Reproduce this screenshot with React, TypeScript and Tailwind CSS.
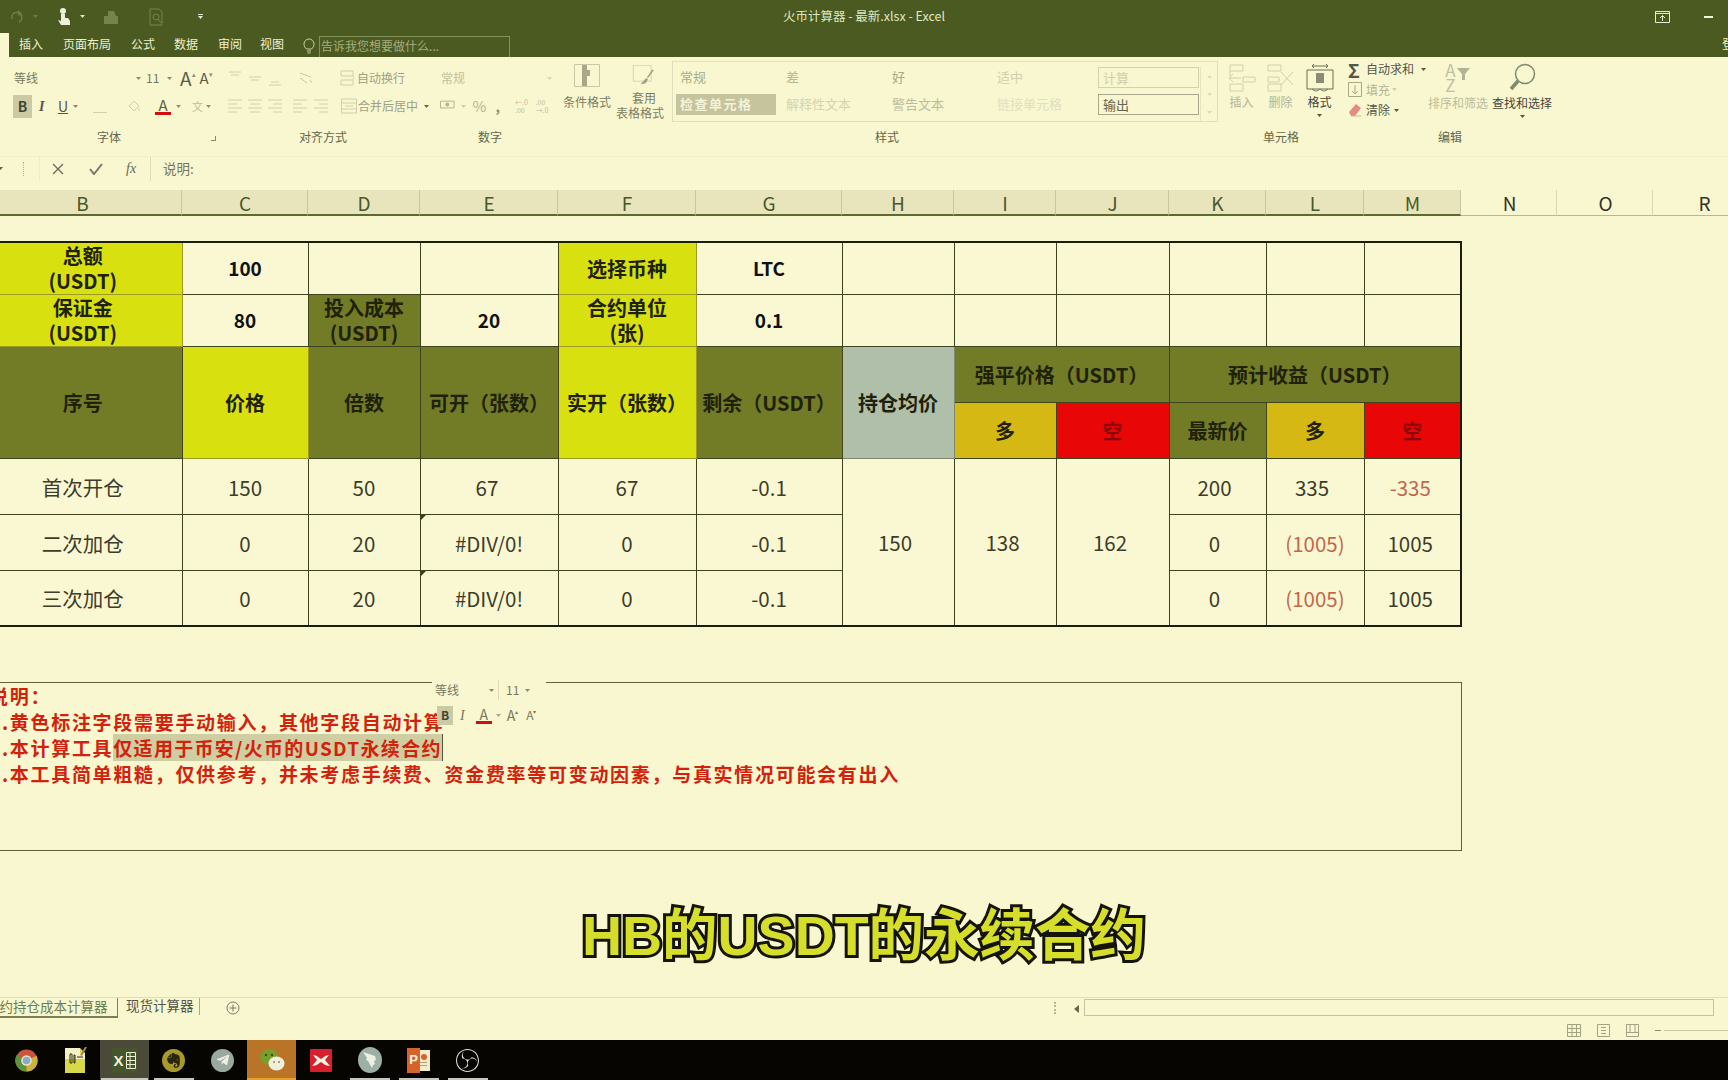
import React, { ReactNode } from 'react';
import { SiEvernote, SiObsstudio } from 'react-icons/si';
import { FaTelegramPlane } from 'react-icons/fa';

const cjk = "font-['Noto_Sans_CJK_SC','Noto_Sans',sans-serif]";

const Caret: React.FC<{ className?: string }> = ({ className = 'text-[#8b8b70]' }) => (
  <svg width="5" height="3" viewBox="0 0 5 3" className={`shrink-0 ${className}`}>
    <path d="M0 0h5L2.5 3z" fill="currentColor" />
  </svg>
);

// three stacked strokes used by the alignment buttons
const Lines: React.FC<{ kind: 'left' | 'center' | 'right' | 'top' | 'mid' | 'bottom' }> = ({ kind }) => {
  const rows: Record<string, string> = {
    left: 'M1 3h14M1 7h9M1 11h14M1 15h9',
    center: 'M1 3h14M3 7h10M1 11h14M3 15h10',
    right: 'M1 3h14M6 7h9M1 11h14M6 15h9',
    top: 'M2 3h12M4 6h8',
    mid: 'M2 8h12M4 11h8',
    bottom: 'M4 13h8M2 16h12',
  };
  return (
    <svg width="16" height="18" viewBox="0 0 16 18" className="text-[#d0d0ae]">
      <path d={rows[kind]} stroke="currentColor" strokeWidth="1" fill="none" />
    </svg>
  );
};

const TitleBar = () => (
  <header className="h-[57px] shrink-0 bg-[#4b5a20] flex flex-col">
    <div className="h-[33px] flex items-center relative">
      <svg width="16" height="16" viewBox="0 0 16 16" className="ml-[9px] text-[#6f7d47]">
        <path d="M3 10a5 5 0 1 1 7 3M9 2l3 3-3 1" stroke="currentColor" strokeWidth="1.6" fill="none" />
      </svg>
      <Caret className="ml-[8px] text-[#6f7d47]" />
      <svg width="14" height="20" viewBox="0 0 14 20" className="ml-[19px] text-[#eef0dc]">
        <circle cx="6" cy="4" r="3" fill="currentColor" />
        <path d="M4 7h4v4h3l2 3v4H4l-3-5 3 1z" fill="currentColor" />
      </svg>
      <Caret className="ml-[9px] text-[#dfe3c8]" />
      <svg width="20" height="18" viewBox="0 0 20 18" className="ml-[17px] text-[#75844a]">
        <path d="M2 8h14v8H2zM6 8V3h6l2 5M17 5v4" fill="currentColor" />
      </svg>
      <svg width="15" height="18" viewBox="0 0 15 18" className="ml-[27px] text-[#75844a]">
        <path d="M1 1h9l3 3v13H1zM9 11l3 4" stroke="currentColor" fill="none" />
        <circle cx="7" cy="9" r="3" stroke="currentColor" fill="none" />
      </svg>
      <div className="ml-[34px] flex flex-col items-center gap-[1px]">
        <span className="w-[5px] h-[1px] bg-[#e4e8d0]" />
        <Caret className="text-[#e4e8d0]" />
      </div>
      <div className="absolute inset-x-0 top-[7px] text-center text-[12.5px] leading-[18px] text-[#dfe8c2]">
        火币计算器 - 最新.xlsx - Excel
      </div>
      <div className="ml-auto flex items-center mr-[15px] gap-[34px]">
        <svg width="15" height="12" viewBox="0 0 15 12" className="text-[#e6ecd0]">
          <path d="M.5.5h14v11H.5zM.5 2.5h14M7.5 10V5M5 7l2.5-2.5L10 7" stroke="currentColor" fill="none" />
        </svg>
        <span className="w-[9px] h-[2px] bg-[#f2f4e0]" />
      </div>
    </div>
    <nav className="h-[24px] flex text-[12px] text-[#eef0d0]">
      <div className="w-[9px] bg-[#f8f7cf]" />
      <span className="ml-[10px] leading-[22px]">插入</span>
      <span className="ml-[20px] leading-[22px]">页面布局</span>
      <span className="ml-[20px] leading-[22px]">公式</span>
      <span className="ml-[19px] leading-[22px]">数据</span>
      <span className="ml-[20px] leading-[22px]">审阅</span>
      <span className="ml-[18px] leading-[22px]">视图</span>
      <svg width="12" height="17" viewBox="0 0 12 17" className="ml-[19px] mt-[5px] text-[#c8d0a4]">
        <path d="M3.5 11C2 9.5 1 8.5 1 6a5 5 0 0 1 10 0c0 2.500-1 3.500-2.500 5zM4 13h4M4.500 15h3" stroke="currentColor" fill="none" />
      </svg>
      <div className="ml-[4px] mt-[3px] w-[191px] h-[21px] border border-b-0 border-[#83925a] text-[#a6ae7e] pl-[1px] leading-[18px]">
        告诉我您想要做什么...
      </div>
      <span className="ml-auto mr-[-8px] leading-[22px] w-[14px] overflow-hidden">登录</span>
    </nav>
  </header>
);

const GroupLabel: React.FC<{ children: ReactNode }> = ({ children }) => (
  <div className="h-[34px] flex items-center justify-center text-[12px] text-[#66664c]">{children}</div>
);

const Ribbon = () => (
  <section className="h-[100px] shrink-0 flex text-[12px] text-[#8f8f74] border-b border-[#f1f0c8]">
    {/* font */}
    <div className="w-[218px] shrink-0 flex flex-col pt-[7px] relative">
      <div className="h-[28px] flex items-center pl-[14px]">
        <span className="w-[122px] text-[#77775f]">等线</span>
        <Caret />
        <span className="ml-[5px] w-[21px] text-[#77775f]">11</span>
        <Caret />
        <span className="ml-[8px] text-[19px] text-[#5d5d49]">A</span>
        <span className="mb-[8px] text-[7px]">▴</span>
        <span className="ml-[4px] text-[15px] text-[#5d5d49]">A</span>
        <span className="mb-[8px] text-[7px]">▾</span>
      </div>
      <div className="h-[28px] flex items-center pl-[13px]">
        <span className="w-[19px] h-[23px] bg-[#cbcaa4] flex items-center justify-center font-bold text-[14px] text-[#454534]">B</span>
        <span className="ml-[7px] w-[12px] italic font-bold text-[14px] font-['Liberation_Serif',serif] text-[#54544a]">I</span>
        <span className="ml-[7px] text-[14px] underline text-[#54544a]">U</span>
        <Caret className="ml-[5px] text-[#8b8b70]" />
        <span className="ml-[15px] w-[14px] h-[1px] mt-[12px] bg-[#d0d0ae]" />
        <svg width="14" height="14" viewBox="0 0 14 14" className="ml-[20px] text-[#cfcfac]">
          <path d="M2 7l5-5 5 5-5 5zM12 9v3" stroke="currentColor" fill="none" />
        </svg>
        <div className="ml-[14px] flex flex-col items-center w-[16px]">
          <span className="text-[15px] leading-[15px] text-[#5d5d49]">A</span>
          <span className="w-[16px] h-[3px] bg-[#d01010]" />
        </div>
        <Caret className="ml-[5px]" />
        <span className="ml-[11px] text-[11px] text-[#bcbc9c]">文</span>
        <Caret className="ml-[3px]" />
      </div>
      <GroupLabel>字体</GroupLabel>
      <span className="absolute right-[2px] bottom-[15px] w-[5px] h-[5px] border-r border-b border-[#88886c]" />
    </div>

    {/* alignment */}
    <div className="w-[210px] shrink-0 flex flex-col pt-[7px] whitespace-nowrap">
      <div className="h-[28px] flex items-center pl-[9px]">
        <div className="flex gap-[4px]">
          <Lines kind="top" />
          <Lines kind="mid" />
          <Lines kind="bottom" />
        </div>
        <svg width="16" height="16" viewBox="0 0 16 16" className="ml-[15px] text-[#c8c8a6]">
          <path d="M2 3l11 4M2 8l7 5M12 10l2 3" stroke="currentColor" fill="none" />
        </svg>
        <svg width="16" height="16" viewBox="0 0 16 16" className="ml-[26px] text-[#cfcfac]">
          <path d="M1 1h12v5H1zM1 10h12v5H1zM13 6c2 2 0 4-2 4" stroke="currentColor" fill="none" />
        </svg>
        <span className="ml-[1px] text-[#a0a084]">自动换行</span>
      </div>
      <div className="h-[28px] flex items-center pl-[9px]">
        <div className="flex gap-[4px] shrink-0">
          <Lines kind="left" />
          <Lines kind="center" />
          <Lines kind="right" />
        </div>
        <div className="ml-[9px] flex gap-[5px] shrink-0">
          <Lines kind="left" />
          <Lines kind="right" />
        </div>
        <svg width="16" height="16" viewBox="0 0 16 16" className="ml-[12px] shrink-0 text-[#cfcfac]">
          <path d="M.5 1h15v14H.5zM.5 5h15M.5 11h15M4 8h8" stroke="currentColor" fill="none" />
        </svg>
        <span className="ml-[1px] shrink-0 text-[#a0a084]">合并后居中</span>
        <Caret className="ml-[6px] text-[#66664c]" />
      </div>
      <GroupLabel>对齐方式</GroupLabel>
    </div>

    {/* number */}
    <div className="w-[124px] shrink-0 flex flex-col pt-[7px]">
      <div className="h-[28px] flex items-center pl-[13px]">
        <span className="w-[108px] text-[#c0c09e]">常规</span>
        <Caret className="text-[#d6d6b6]" />
      </div>
      <div className="h-[28px] flex items-center pl-[12px]">
        <svg width="15" height="12" viewBox="0 0 15 12" className="text-[#b5b594]">
          <path d="M.5 1h14v7H.5z" stroke="currentColor" fill="none" />
          <circle cx="7.500" cy="4.500" r="2" fill="currentColor" />
        </svg>
        <Caret className="ml-[6px] text-[#cfcfac]" />
        <span className="ml-[7px] text-[15px] text-[#b4b494]">%</span>
        <span className="ml-[9px] font-bold text-[14px] text-[#8c8c70]">,</span>
        <div className="ml-[15px] text-[7px] leading-[8px] text-[#c0c09e] w-[17px]">
          <div>←.0</div>
          <div>.00</div>
        </div>
        <div className="ml-[4px] text-[7px] leading-[8px] text-[#c0c09e] w-[17px]">
          <div>.00</div>
          <div>→.0</div>
        </div>
      </div>
      <GroupLabel>数字</GroupLabel>
    </div>

    {/* styles */}
    <div className="w-[670px] shrink-0 flex flex-col pt-[4px]">
      <div className="h-[59px] flex text-[#7d7d64]">
        <div className="w-[58px] ml-[6px] mt-[3px] flex flex-col items-center">
          <svg width="26" height="27" viewBox="0 0 26 27" className="text-[#c8c8a8]">
            <path d="M.5.5h25v22H.5z" stroke="currentColor" fill="none" />
            <path d="M8 1h5v5h3v6h-3v10H8z" fill="#a8a888" />
          </svg>
          <span className="mt-[3px] leading-[15px]">条件格式</span>
        </div>
        <div className="w-[48px] flex flex-col items-center mt-[3px]">
          <svg width="32" height="29" viewBox="0 0 32 29" className="ml-[8px] mt-[1px] text-[#c8c8a8]">
            <path d="M.5.500h26v23H.5z" stroke="currentColor" fill="none" />
            <path d="M30 8l-8 11-2-1 8-12zM19 19l3 2-4 6-7 1z" fill="#a4a484" />
          </svg>
          <span className="ml-[8px] leading-[15px] mt-[5px]">套用</span>
          <span className="leading-[15px] whitespace-nowrap">表格格式</span>
        </div>
        <div className="ml-[8px] w-[546px] h-[61px] shrink-0 border border-[#dfdfbc] pl-[3px] pt-[5px] flex">
          <div className="w-[523px] grid grid-cols-[106px_106px_105px_105px_101px] grid-rows-[21px_21px] gap-y-[6px] text-[13px] leading-[20px]">
            <span className="pl-[4px] text-[#a9a98c]">常规</span>
            <span className="pl-[4px] text-[#b7b798]">差</span>
            <span className="pl-[4px] text-[#a9a98c]">好</span>
            <span className="pl-[4px] text-[#d0d0ae]">适中</span>
            <span className="pl-[4px] border border-[#d2d2b0] text-[#cfcfac]">计算</span>
            <span className="mr-[6px] bg-[#c6c49c] pl-[4px] font-bold text-[#f4f3d8] tracking-[1.500px]">检查单元格</span>
            <span className="pl-[4px] text-[#d4d4b2]">解释性文本</span>
            <span className="pl-[4px] text-[#bcbc9c]">警告文本</span>
            <span className="pl-[4px] text-[#e0e0c0]">链接单元格</span>
            <span className="pl-[4px] border border-[#a8a88a] text-[#63634e]">输出</span>
          </div>
          <div className="flex-1 flex flex-col items-center justify-around border-l border-[#e4e4c2] ml-[1px]">
            <Caret className="text-[#dcdcba] rotate-180" />
            <Caret className="text-[#dcdcba]" />
            <Caret className="text-[#dcdcba]" />
          </div>
        </div>
      </div>
      <GroupLabel>样式</GroupLabel>
    </div>

    {/* cells */}
    <div className="w-[118px] shrink-0 flex flex-col pt-[4px]">
      <div className="h-[59px] flex text-[12px] text-center pt-[2px]">
        <div className="w-[39px] flex flex-col items-center text-[#b4b496]">
          <svg width="30" height="29" viewBox="0 0 30 29" className="text-[#d0d0ae]">
            <path d="M3 2h13v6H3zM16 14h12v5H16zM3 21h13v7H3zM3 8v5M14 15H2M6 11l-4 4 4 4" stroke="currentColor" fill="none" />
          </svg>
          <span className="mt-[2px] leading-[15px]">插入</span>
        </div>
        <div className="w-[39px] flex flex-col items-center text-[#b4b496]">
          <svg width="30" height="29" viewBox="0 0 30 29" className="text-[#d0d0ae]">
            <path d="M2 2h13v6H2zM2 14h11v5H2zM2 21h13v7H2zM15 9l12 13M27 9L15 22" stroke="currentColor" fill="none" />
          </svg>
          <span className="mt-[2px] leading-[15px]">删除</span>
        </div>
        <div className="w-[39px] flex flex-col items-center text-[#45453a]">
          <svg width="28" height="29" viewBox="0 0 28 29" className="text-[#6b6b55]">
            <path d="M1 7h26v19H1zM6 3h16M6 3l2-2M6 3l2 2M22 3l-2-2M22 3l-2 2M6 26c3 3 6 2 8 0 2 2 5 3 8 0" stroke="currentColor" fill="none" />
            <path d="M10 10h8v10h-8z" fill="#8b8b78" />
          </svg>
          <span className="mt-[2px] leading-[15px]">格式</span>
          <Caret className="mt-[5px] text-[#55554a]" />
        </div>
      </div>
      <GroupLabel>单元格</GroupLabel>
    </div>

    {/* editing */}
    <div className="w-[220px] shrink-0 flex flex-col pt-[4px]">
      <div className="h-[59px] flex text-[12px]">
        <div className="w-[86px] pl-[8px] -mt-[2px] flex flex-col">
          <div className="h-[21px] flex items-center text-[#55554a]">
            <span className="w-[17px] text-[19px] font-bold leading-none">Σ</span>
            <span className="ml-[1px]">自动求和</span>
            <Caret className="ml-[7px]" />
          </div>
          <div className="h-[21px] flex items-center text-[#b4b496]">
            <svg width="14" height="15" viewBox="0 0 14 15" className="text-[#a8a88a]">
              <path d="M.5.500h13v14H.500zM7 3v9M4 9l3 3 3-3" stroke="currentColor" fill="none" />
            </svg>
            <span className="ml-[4px]">填充</span>
            <Caret className="ml-[2px] text-[#d0d0ae]" />
          </div>
          <div className="h-[20px] flex items-center text-[#55554a]">
            <svg width="14" height="14" viewBox="0 0 14 14">
              <path d="M1 9l7-8 5 4-6 8H3z" fill="#e28d84" />
              <path d="M3 13h10" stroke="#bcbc9c" />
            </svg>
            <span className="ml-[4px]">清除</span>
            <Caret className="ml-[4px]" />
          </div>
        </div>
        <div className="w-[64px] flex flex-col items-center text-[#bcbc9e]">
          <div className="h-[31px] flex items-center text-[#c0c0a2]">
            <div className="text-[17px] leading-[15px] flex flex-col">
              <span>A</span>
              <span>Z</span>
            </div>
            <svg width="15" height="15" viewBox="0 0 15 15" className="mb-[6px]">
              <path d="M1 2h13L9 8v6H6V8z" fill="#b2b294" />
            </svg>
          </div>
          <span className="mt-[3px] leading-[15px] whitespace-nowrap">排序和筛选</span>
        </div>
        <div className="w-[64px] flex flex-col items-center text-[#45453a]">
          <svg width="30" height="29" viewBox="0 0 30 29" className="mt-[2px] text-[#7f8a70]">
            <circle cx="18" cy="11" r="9.500" stroke="currentColor" strokeWidth="1.500" fill="none" />
            <path d="M11 18l-7 8" stroke="currentColor" strokeWidth="3.500" />
          </svg>
          <span className="mt-[3px] leading-[15px] whitespace-nowrap">查找和选择</span>
          <Caret className="mt-[5px] text-[#55554a]" />
        </div>
      </div>
      <GroupLabel>编辑</GroupLabel>
    </div>
  </section>
);

const FormulaBar = () => (
  <section className="h-[33px] shrink-0 flex items-center pb-[10px] text-[#76765e]">
    <Caret className="text-[#66664c] -ml-[2px]" />
    <span className="ml-[20px] w-[2px] h-[14px] border-l border-dotted border-[#b5b596]" />
    <span className="ml-[14px] w-[1px] h-[24px] bg-[#eeedc4]" />
    <svg width="12" height="12" viewBox="0 0 12 12" className="ml-[12px]">
      <path d="M1 1l10 10M11 1L1 11" stroke="#6a6a5a" strokeWidth="1.300" />
    </svg>
    <svg width="14" height="12" viewBox="0 0 14 12" className="ml-[25px]">
      <path d="M1 6l4 5 8-10" stroke="#77776a" strokeWidth="2" fill="none" />
    </svg>
    <span className="ml-[23px] text-[14px] italic font-['Liberation_Serif',serif] text-[#6a6a58]">fx</span>
    <span className="ml-[14px] w-[1px] h-[24px] bg-[#dcdcb8]" />
    <span className="ml-[12px] text-[13.5px]">说明:</span>
  </section>
);

const columns = [
  { label: 'C', w: 'w-[126px]' },
  { label: 'D', w: 'w-[112px]' },
  { label: 'E', w: 'w-[138px]' },
  { label: 'F', w: 'w-[138px]' },
  { label: 'G', w: 'w-[146px]' },
  { label: 'H', w: 'w-[112px]' },
  { label: 'I', w: 'w-[102px]' },
  { label: 'J', w: 'w-[113px]' },
  { label: 'K', w: 'w-[97px]' },
  { label: 'L', w: 'w-[98px]' },
  { label: 'M', w: 'w-[97px]' },
];

const cellHead = 'shrink-0 bg-[#e8e5bc] text-[#49582a] border-r border-[#c9c7a0] border-b-2 border-b-[#5d6a30] pl-[1px]';

const ColumnHeader = () => (
  <div className="h-[26px] shrink-0 flex text-[19px] leading-[25px] text-center">
    {/* B starts left of the window, its label is centred on the hidden part too */}
    <div className={`w-[199px] -ml-[17px] ${cellHead}`}>B</div>
    {columns.map((c) => (
      <div key={c.label} className={`${c.w} ${cellHead}`}>
        {c.label}
      </div>
    ))}
    {['N', 'O'].map((l) => (
      <div key={l} className="w-[96px] shrink-0 pl-[2px] text-[#33332a] border-r border-[#d8d8b4] border-b border-b-[#b8b896]">
        {l}
      </div>
    ))}
    <div className="w-[100px] shrink-0 pl-[3px] text-[#33332a] border-b border-b-[#b8b896]">R</div>
  </div>
);

const line = 'border border-[#3f431e] text-center align-middle';
const head = `${line} font-bold text-[20px] leading-[25px] text-[#1f2208]`;
const lime = `${head} bg-[#d8e010] border-[#9c9c24]`;
const olive = `${head} bg-[#727b25]`;
const value = `${line} font-bold text-[19px] text-[#111]`;
const data = `${line} text-[20.500px] pt-[2px] text-[#3d3d2a]`;
const loss = 'text-[#c4664a]';

const CommentMark = () => (
  <span className="absolute left-0 top-0 w-0 h-0 border-t-[5px] border-t-[#3d4014] border-r-[5px] border-r-transparent" />
);

const CalcTable = () => (
  <table className="table-fixed border-collapse -ml-[18px] w-[1479px] border-2 border-[#1c1e0c] bg-[#faf8d3]">
    <colgroup>
      <col className="w-[199px]" />
      <col className="w-[126px]" />
      <col className="w-[112px]" />
      <col className="w-[138px]" />
      <col className="w-[138px]" />
      <col className="w-[146px]" />
      <col className="w-[112px]" />
      <col className="w-[102px]" />
      <col className="w-[113px]" />
      <col className="w-[97px]" />
      <col className="w-[98px]" />
      <col className="w-[97px]" />
    </colgroup>
    <tbody>
      <tr className="h-[52px]">
        <td className={lime}>总额<br />(USDT)</td>
        <td className={value}>100</td>
        <td className={line} />
        <td className={line} />
        <td className={lime}>选择币种</td>
        <td className={value}>LTC</td>
        <td className={line} />
        <td className={line} />
        <td className={line} />
        <td className={line} />
        <td className={line} />
        <td className={line} />
      </tr>
      <tr className="h-[52px]">
        <td className={lime}>保证金<br />(USDT)</td>
        <td className={value}>80</td>
        <td className={olive}>投入成本<br />(USDT)</td>
        <td className={value}>20</td>
        <td className={lime}>合约单位<br />(张)</td>
        <td className={value}>0.1</td>
        <td className={line} />
        <td className={line} />
        <td className={line} />
        <td className={line} />
        <td className={line} />
        <td className={line} />
      </tr>
      <tr className="h-[56px]">
        <td rowSpan={2} className={olive}>序号</td>
        <td rowSpan={2} className={lime}>价格</td>
        <td rowSpan={2} className={olive}>倍数</td>
        <td rowSpan={2} className={`${olive} whitespace-nowrap`}>可开（张数）</td>
        <td rowSpan={2} className={`${lime} whitespace-nowrap`}>实开（张数）</td>
        <td rowSpan={2} className={`${olive} whitespace-nowrap`}>剩余（USDT）</td>
        <td rowSpan={2} className={`${head} bg-[#afbfa9] border-[#7e8a70]`}>持仓均价</td>
        <td colSpan={2} className={olive}>强平价格（USDT）</td>
        <td colSpan={3} className={olive}>预计收益（USDT）</td>
      </tr>
      <tr className="h-[56px]">
        <td className={`${head} bg-[#d6b814]`}>多</td>
        <td className={`${head} bg-[#e90606] text-[#8a0808]`}>空</td>
        <td className={olive}>最新价</td>
        <td className={`${head} bg-[#d6b814]`}>多</td>
        <td className={`${head} bg-[#e90606] text-[#8a0808]`}>空</td>
      </tr>
      <tr className="h-[56px]">
        <td className={data}>首次开仓</td>
        <td className={data}>150</td>
        <td className={data}>50</td>
        <td className={`${data} pr-[4px]`}>67</td>
        <td className={data}>67</td>
        <td className={data}>-0.1</td>
        <td rowSpan={3} className={`${data} pr-[6px]`}>150</td>
        <td rowSpan={3} className={`${data} pr-[5px]`}>138</td>
        <td rowSpan={3} className={`${data} pr-[5px]`}>162</td>
        <td className={`${data} pr-[6px]`}>200</td>
        <td className={`${data} pr-[6px]`}>335</td>
        <td className={`${data} pr-[4px] ${loss}`}>-335</td>
      </tr>
      <tr className="h-[56px]">
        <td className={data}>二次加仓</td>
        <td className={data}>0</td>
        <td className={data}>20</td>
        <td className={`${data} relative`}><CommentMark />#DIV/0!</td>
        <td className={data}>0</td>
        <td className={data}>-0.1</td>
        <td className={`${data} pr-[6px]`}>0</td>
        <td className={`${data} ${loss}`}>(1005)</td>
        <td className={`${data} pr-[4px]`}>1005</td>
      </tr>
      <tr className="h-[56px]">
        <td className={data}>三次加仓</td>
        <td className={data}>0</td>
        <td className={data}>20</td>
        <td className={`${data} relative`}><CommentMark />#DIV/0!</td>
        <td className={data}>0</td>
        <td className={data}>-0.1</td>
        <td className={`${data} pr-[6px]`}>0</td>
        <td className={`${data} ${loss}`}>(1005)</td>
        <td className={`${data} pr-[4px]`}>1005</td>
      </tr>
    </tbody>
  </table>
);

const NoteBox = () => (
  <div className="mt-[55px] -ml-[17px] w-[1479px] h-[169px] border border-[#5f6534] pl-[5px] text-[19px] leading-[26px] tracking-[1.700px] font-bold text-[#d3220c] whitespace-nowrap">
    <div>说明：</div>
    <div>1.黄色标注字段需要手动输入，其他字段自动计算</div>
    <div>
      2.本计算工具
      <span className="bg-[#cfcda2] border-r border-[#55553c] tracking-[1.300px]">仅适用于币安/火币的USDT永续合约</span>
    </div>
    <div>3.本工具简单粗糙，仅供参考，并未考虑手续费、资金费率等可变动因素，与真实情况可能会有出入</div>
  </div>
);

const MiniToolbar = () => (
  <div className="absolute left-[432px] top-[677px] w-[114px] h-[58px] text-[#77775f] flex flex-col">
    <div className="h-[26px] flex items-center pl-[3px] text-[12px] bg-[#f8f7cf]">
      <span className="w-[54px]">等线</span>
      <Caret />
      <span className="ml-[4px] pl-[7px] w-[27px] border-l border-[#dcdcb8] leading-[20px]">11</span>
      <Caret />
    </div>
    <div className="h-[24px] flex items-center pl-[5px]">
      <span className="w-[16px] h-[19px] bg-[#cbcaa4] flex items-center justify-center font-bold text-[12px] text-[#454534]">B</span>
      <span className="ml-[7px] italic text-[14px] font-['Liberation_Serif',serif]">I</span>
      <div className="ml-[11px] flex flex-col items-center w-[16px]">
        <span className="text-[14px] leading-[14px]">A</span>
        <span className="w-[16px] h-[3px] bg-[#d01010]" />
      </div>
      <Caret className="ml-[4px] text-[#a8a88a]" />
      <span className="ml-[6px] text-[14px]">A</span>
      <span className="mb-[7px] text-[6px]">▴</span>
      <span className="ml-[8px] text-[12px]">A</span>
      <span className="mb-[7px] text-[6px]">▾</span>
    </div>
  </div>
);

const SheetTabs = () => (
  <div className="h-[23px] shrink-0 flex border-t border-[#dedebc] text-[13.500px] overflow-hidden">
    <div className="w-[118px] h-[20px] shrink-0 border-r border-b-2 border-[#7d8050] text-[#6b8052] leading-[16px] whitespace-nowrap overflow-hidden">
      <span className="-ml-[14px] block">合约持仓成本计算器</span>
    </div>
    <span className="ml-[8px] w-[74px] h-[17px] border-r border-[#a8a88a] text-[#55554a] leading-[14px]">现货计算器</span>
    <svg width="14" height="14" viewBox="0 0 14 14" className="ml-[26px] mt-[3px] text-[#77775f]">
      <circle cx="7" cy="7" r="6" stroke="currentColor" fill="none" />
      <path d="M7 3.500v7M3.500 7h7" stroke="currentColor" />
    </svg>
    <span className="ml-[814px] mt-[4px] w-[2px] h-[12px] border-l-2 border-dotted border-[#b8b896]" />
    <svg width="5" height="8" viewBox="0 0 5 8" className="ml-[18px] mt-[7px] text-[#66664c]">
      <path d="M5 0v8L0 4z" fill="currentColor" />
    </svg>
    <div className="ml-[5px] mt-[1px] w-[630px] h-[17px] border border-[#c5c59c]" />
  </div>
);

const StatusBar = () => (
  <div className="h-[20px] shrink-0 flex items-center justify-end text-[#a3a384]">
    <svg width="14" height="13" viewBox="0 0 14 13">
      <path d="M.5.500h13v12H.500zM.5 4.500h13M.5 8.500h13M5 .5v12M9.500.5v12" stroke="currentColor" fill="none" />
    </svg>
    <svg width="13" height="13" viewBox="0 0 13 13" className="ml-[16px]">
      <path d="M.5.500h12v12H.500zM4 3.500h5M4 6.500h5M4 9.500h5" stroke="currentColor" fill="none" />
    </svg>
    <svg width="13" height="13" viewBox="0 0 13 13" className="ml-[16px]">
      <path d="M.5.500h12v12H.500zM.5 8.500h12M4 .5v8M9 .5v8" stroke="currentColor" fill="none" />
    </svg>
    <span className="ml-[16px] w-[6px] h-[1px] bg-[#8e8e72]" />
    <span className="ml-[3px] w-[64px] h-[1px] bg-[#c8c8a8]" />
  </div>
);

const Chrome = () => (
  <svg width="23" height="23" viewBox="0 0 24 24">
    <circle cx="12" cy="12" r="11.500" fill="#c9563a" />
    <path d="M12 12L2 6a11.500 11.500 0 0 0 10 17.500z" fill="#5f9339" />
    <path d="M12 12l10.500-5A11.500 11.500 0 0 1 12 23.500z" fill="#cdb23a" />
    <circle cx="12" cy="12" r="5.500" fill="#e8e4d4" />
    <circle cx="12" cy="12" r="4" fill="#8daac4" />
  </svg>
);

const Notepad = () => (
  <svg width="24" height="28" viewBox="0 0 24 28">
    <path d="M1 2h15l5 5v20H1z" fill="#d7d94a" />
    <path d="M1 2h15v5h5v6H1z" fill="#f2f0c4" />
    <path d="M6 17v-9h2v9zM10 9h1v8h-1zM13 11h6" stroke="#2e2e14" fill="none" />
    <path d="M23 1l-5 9-2-1 5-8z" fill="#b08a48" />
  </svg>
);

const ExcelIcon = () => (
  <div className="w-[25px] h-[25px] bg-[#45552c] flex items-center justify-center gap-[2px]">
    <span className="text-[15px] font-bold leading-none text-[#f2f2dc] font-['Liberation_Sans',sans-serif]">X</span>
    <svg width="10" height="17" viewBox="0 0 10 17" className="text-[#eeeed8]">
      <path d="M.5.500h9v16h-9zM.5 4.500h9M.5 8.500h9M.5 12.500h9M4 .5v16" stroke="currentColor" fill="none" />
    </svg>
  </div>
);

const Evernote = () => (
  <div className="w-[23px] h-[23px] rounded-full bg-[#a79a2a] flex items-center justify-center">
    <SiEvernote size={15} className="text-[#27260f]" />
  </div>
);

const Telegram = () => (
  <div className="w-[23px] h-[23px] rounded-full bg-[#9aa99f] flex items-center justify-center">
    <FaTelegramPlane size={14} className="text-[#eef0e4]" />
  </div>
);

const Wechat = () => (
  <svg width="26" height="24" viewBox="0 0 26 24">
    <ellipse cx="10" cy="9" rx="9" ry="8" fill="#7a9e2e" />
    <circle cx="7" cy="7" r="1.200" fill="#3c4c14" />
    <circle cx="13" cy="7" r="1.200" fill="#3c4c14" />
    <ellipse cx="17.500" cy="15.500" rx="8" ry="7" fill="#f0efdc" />
    <circle cx="15" cy="14" r="1" fill="#8a8a6a" />
    <circle cx="20" cy="14" r="1" fill="#8a8a6a" />
  </svg>
);

const Xmind = () => (
  <svg width="22" height="23" viewBox="0 0 22 23">
    <rect width="22" height="23" rx="1" fill="#d81f2b" />
    <path d="M3 6c4 0 6 3 8 4 2-1 4-4 8-4l-4 5 5 6c-5 0-7-3-9-4-2 1-4 4-9 4l5-6z" fill="#f6f0e2" />
  </svg>
);

const Feather = () => (
  <svg width="24" height="26" viewBox="0 0 24 26">
    <ellipse cx="12" cy="13" rx="12" ry="13" fill="#9cb0a6" />
    <path d="M5 5l12 4 1 4-2 1 1 3-2 1-1 3-4-7-2-1 1-2z" fill="#eef0e2" />
  </svg>
);

const PowerPoint = () => (
  <div className="relative w-[23px] h-[25px] flex items-center">
    <div className="absolute right-0 top-[2px] w-[13px] h-[21px] bg-[#f2ecc8] flex flex-col gap-[2px] items-center justify-center">
      <span className="w-[6px] h-[6px] rounded-full bg-[#d5642b]" />
      <span className="w-[7px] h-[1px] bg-[#b8a070]" />
      <span className="w-[7px] h-[1px] bg-[#b8a070]" />
    </div>
    <div className="absolute left-0 top-0 w-[13px] h-[25px] bg-[#d5642b] flex items-center justify-center text-[13px] font-bold text-[#f8eedc] font-['Liberation_Sans',sans-serif]">
      P
    </div>
  </div>
);

const apps: { key: string; icon: ReactNode; bg?: string; bar?: string }[] = [
  { key: 'chrome', icon: <Chrome /> },
  { key: 'notepad', icon: <Notepad /> },
  { key: 'excel', icon: <ExcelIcon />, bg: 'bg-[#4b4a38]', bar: 'w-[47px] bg-[#c8c8c0]' },
  { key: 'evernote', icon: <Evernote />, bar: 'w-[40px] bg-[#c8c8c0]' },
  { key: 'telegram', icon: <Telegram /> },
  { key: 'wechat', icon: <Wechat />, bg: 'bg-[#b97428]', bar: 'w-[49px] bg-[#e6a02c]' },
  { key: 'xmind', icon: <Xmind /> },
  { key: 'feather', icon: <Feather />, bar: 'w-[40px] bg-[#c8c8c0]' },
  { key: 'ppt', icon: <PowerPoint />, bar: 'w-[40px] bg-[#c8c8c0]' },
  { key: 'obs', icon: <SiObsstudio size={23} className="text-[#dcdccc]" />, bar: 'w-[40px] bg-[#c8c8c0]' },
];

const Taskbar = () => (
  <footer className="h-[40px] shrink-0 bg-[#070502] flex pl-[2px]">
    {apps.map((a) => (
      <div key={a.key} className={`relative w-[49px] flex items-center justify-center ${a.bg ?? ''}`}>
        {a.icon}
        {a.bar && <span className={`absolute bottom-0 h-[2px] ${a.bar}`} />}
      </div>
    ))}
  </footer>
);

export default function App() {
  return (
    <div className={`relative w-[1728px] h-[1080px] overflow-hidden flex flex-col bg-[#f8f7cf] ${cjk}`}>
      <TitleBar />
      <Ribbon />
      <FormulaBar />
      <ColumnHeader />
      <main className="flex-1 pt-[25px]">
        <CalcTable />
        <NoteBox />
      </main>
      <SheetTabs />
      <StatusBar />
      <Taskbar />
      <MiniToolbar />
      <div className="absolute left-0 right-0 top-[899px] text-center text-[55.500px] leading-[74px] font-bold text-[#d6de2c] font-['Liberation_Sans','Noto_Sans_CJK_SC',sans-serif] [-webkit-text-stroke:6px_#14140a] [paint-order:stroke_fill]">
        HB的USDT的永续合约
      </div>
    </div>
  );
}
